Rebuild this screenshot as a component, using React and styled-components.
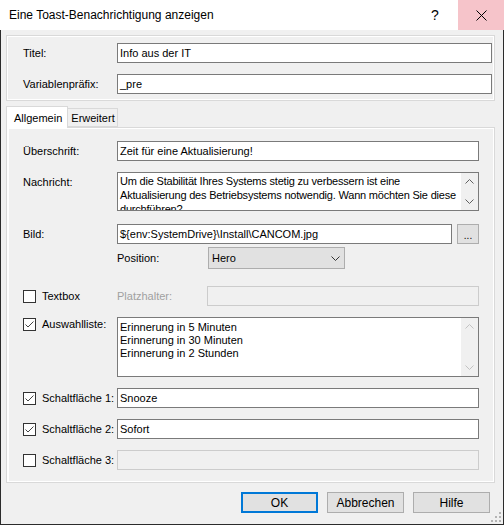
import React from 'react';
import styled, { createGlobalStyle } from 'styled-components';

const GlobalStyle = createGlobalStyle`
  html, body {
    margin: 0;
    padding: 0;
    background: #f0f0f0;
  }
  body {
    font-family: "Liberation Sans", Arial, sans-serif;
    font-size: 11px;
    color: #000;
  }
`;

const Window = styled.div`
  width: 504px;
  height: 525px;
  display: flex;
  flex-direction: column;
  background: #f0f0f0;
`;

const TitleBar = styled.div`
  height: 30px;
  flex: none;
  display: flex;
  align-items: center;
  background: #fff;
`;

const Caption = styled.div`
  flex: 1;
  padding-left: 9px;
  font-size: 12px;
`;

const CaptionButton = styled.div`
  width: 46px;
  height: 30px;
  display: flex;
  align-items: center;
  justify-content: center;
  font-size: 14px;
  background: ${(p) => (p.$close ? '#f6c4ca' : 'transparent')};
`;

const Client = styled.div`
  flex: 1;
  display: flex;
  flex-direction: column;
  border: 1px solid #2b2b2b;
  border-top: none;
  padding: 5px 8px 0 5px;
  position: relative;
`;

const GroupBox = styled.div`
  border: 1px solid #d9d9d9;
  box-shadow: inset 1px 1px 0 #fff, inset -1px -1px 0 #fff;
  padding: 7px 2px 6px 16px;
  display: grid;
  grid-template-columns: 94px 1fr;
  row-gap: 11px;
`;

const Label = styled.div`
  display: flex;
  align-items: ${(p) => (p.$top ? 'flex-start' : 'center')};
  padding-top: ${(p) => p.$pt || 0}px;
  gap: 6px;
  white-space: nowrap;
  color: ${(p) => (p.$disabled ? '#a0a0a0' : '#000')};
`;

const TextBox = styled.div`
  height: 20px;
  box-sizing: border-box;
  flex: 1;
  display: flex;
  align-items: center;
  padding-left: 2px;
  border: 1px solid ${(p) => (p.$disabled ? '#cccccc' : '#7a7a7a')};
  background: ${(p) => (p.$disabled ? '#f0f0f0' : '#fff')};
  white-space: nowrap;
  overflow: hidden;
`;

const TabStrip = styled.div`
  display: flex;
  align-items: flex-end;
  margin-top: 5px;
  height: 21px;
`;

const Tab = styled.div`
  position: relative;
  z-index: 1;
  box-sizing: border-box;
  height: ${(p) => (p.$active ? 22 : 19)}px;
  margin-bottom: ${(p) => (p.$active ? -1 : 0)}px;
  padding: ${(p) => (p.$active ? '0 5px 0 7px' : '0 2px 0 3px')};
  display: flex;
  align-items: center;
  border: 1px solid #d9d9d9;
  border-bottom: ${(p) => (p.$active ? 'none' : '1px solid #d9d9d9')};
  border-left: ${(p) => (p.$active ? '1px solid #d9d9d9' : 'none')};
  background: ${(p) => (p.$active ? '#fff' : '#f0f0f0')};
`;

const TabPanel = styled.div`
  border: 1px solid #d9d9d9;
  box-shadow: inset 2px 1px 0 #fff, inset -1px -1px 0 #fff;
  padding: 13px 15px 12px 16px;
  display: grid;
  grid-template-columns: 94px 1fr;
`;

const Cell = styled.div`
  display: flex;
  align-items: center;
  margin-top: ${(p) => p.$mt || 0}px;
`;

const SubLabel = styled.div`
  width: ${(p) => p.$w}px;
  flex: none;
  color: ${(p) => (p.$disabled ? '#a0a0a0' : '#000')};
`;

const MultiLine = styled.div`
  flex: 1;
  height: ${(p) => p.$h}px;
  box-sizing: border-box;
  display: flex;
  border: 1px solid #7a7a7a;
  background: #fff;
  overflow: hidden;
`;

const Lines = styled.div`
  flex: 1;
  padding: ${(p) => p.$pt}px 0 0 2px;
  line-height: ${(p) => p.$lh}px;
  letter-spacing: ${(p) => p.$ls || 0}px;
  white-space: nowrap;
  overflow: hidden;
`;

const ScrollBar = styled.div`
  width: 17px;
  flex: none;
  display: flex;
  flex-direction: column;
  justify-content: space-between;
  background: #f0f0f0;
`;

const ScrollArrow = styled.div`
  height: 17px;
  display: flex;
  align-items: center;
  justify-content: center;
`;

const SmallButton = styled.div`
  width: 22px;
  height: 20px;
  box-sizing: border-box;
  margin-left: 5px;
  border: 1px solid #adadad;
  background: #e1e1e1;
  display: flex;
  align-items: flex-end;
  justify-content: center;
  line-height: 14px;
  font-size: 10px;
`;

const Select = styled.div`
  width: 137px;
  height: 22px;
  box-sizing: border-box;
  border: 1px solid #adadad;
  background: #e1e1e1;
  display: flex;
  align-items: center;
  justify-content: space-between;
  padding: 0 4px 0 3px;
`;

const CheckBox = styled.div`
  width: 13px;
  height: 13px;
  box-sizing: border-box;
  flex: none;
  border: 1px solid #333;
  background: #fff;
  display: flex;
  align-items: center;
  justify-content: center;
`;

const Footer = styled.div`
  display: flex;
  justify-content: flex-end;
  gap: 9px;
  margin-top: 9px;
  margin-right: 5px;
`;

const Button = styled.div`
  width: 77px;
  height: 21px;
  box-sizing: border-box;
  border: 1px solid ${(p) => (p.$default ? '#0078d7' : '#adadad')};
  box-shadow: ${(p) => (p.$default ? 'inset 0 0 0 1px #0078d7' : 'none')};
  background: #e1e1e1;
  display: flex;
  align-items: center;
  justify-content: center;
  font-size: 12px;
`;

const Grip = styled.svg`
  position: absolute;
  right: 2px;
  bottom: 2px;
`;

const Chevron = ({ up, color = '#606060' }) => (
  <svg width="9" height="5" viewBox="0 0 9 5">
    <polyline
      points={up ? '0.5,4.5 4.5,0.5 8.5,4.5' : '0.5,0.5 4.5,4.5 8.5,0.5'}
      fill="none"
      stroke={color}
      strokeWidth="1"
    />
  </svg>
);

const Check = ({ checked }) => (
  <CheckBox>
    {checked && (
      <svg width="11" height="11" viewBox="0 0 11 11">
        <polyline points="1.5,5.5 4,8 9.5,2.5" fill="none" stroke="#444" strokeWidth="1" />
      </svg>
    )}
  </CheckBox>
);

const Scroller = ({ color }) => (
  <ScrollBar>
    <ScrollArrow>
      <Chevron up color={color} />
    </ScrollArrow>
    <ScrollArrow>
      <Chevron color={color} />
    </ScrollArrow>
  </ScrollBar>
);

const reminders = [
  'Erinnerung in 5 Minuten',
  'Erinnerung in 30 Minuten',
  'Erinnerung in 2 Stunden',
];

const buttons = [
  { n: 1, on: true, value: 'Snooze' },
  { n: 2, on: true, value: 'Sofort' },
  { n: 3, on: false, value: '' },
];

export default function App() {
  return (
    <>
      <GlobalStyle />
      <Window>
        <TitleBar>
          <Caption>Eine Toast-Benachrichtigung anzeigen</Caption>
          <CaptionButton>?</CaptionButton>
          <CaptionButton $close>
            <svg width="11" height="11" viewBox="0 0 11 11">
              <path d="M0.5 0.5 L10.5 10.5 M10.5 0.5 L0.5 10.5" stroke="#000" strokeWidth="1" />
            </svg>
          </CaptionButton>
        </TitleBar>

        <Client>
          <GroupBox>
            <Label>Titel:</Label>
            <TextBox>Info aus der IT</TextBox>
            <Label>Variablenpräfix:</Label>
            <TextBox>_pre</TextBox>
          </GroupBox>

          <TabStrip>
            <Tab $active>Allgemein</Tab>
            <Tab>Erweitert</Tab>
          </TabStrip>

          <TabPanel>
            <Label>Überschrift:</Label>
            <Cell>
              <TextBox>Zeit für eine Aktualisierung!</TextBox>
            </Cell>

            <Label $top $pt={15}>Nachricht:</Label>
            <Cell $mt={11}>
              <MultiLine $h={39}>
                <Lines $pt={1} $lh={14} $ls={-0.2}>
                  Um die Stabilität Ihres Systems stetig zu verbessern ist eine
                  <br />
                  Aktualisierung des Betriebsystems notwendig. Wann möchten Sie diese
                  <br />
                  durchführen?
                </Lines>
                <Scroller color="#606060" />
              </MultiLine>
            </Cell>

            <Label $pt={13}>Bild:</Label>
            <Cell $mt={13}>
              <TextBox>{'${env:SystemDrive}\\Install\\CANCOM.jpg'}</TextBox>
              <SmallButton>...</SmallButton>
            </Cell>

            <div />
            <Cell $mt={3}>
              <SubLabel $w={91}>Position:</SubLabel>
              <Select>
                Hero
                <Chevron color="#333" />
              </Select>
            </Cell>

            <Label $pt={17}>
              <Check />
              Textbox
            </Label>
            <Cell $mt={17}>
              <SubLabel $w={90} $disabled>Platzhalter:</SubLabel>
              <TextBox $disabled />
            </Cell>

            <Label $top $pt={12}>
              <Check checked />
              Auswahlliste:
            </Label>
            <Cell $mt={11}>
              <MultiLine $h={60}>
                <Lines $pt={3} $lh={13}>
                  {reminders.map((r) => (
                    <div key={r}>{r}</div>
                  ))}
                </Lines>
                <Scroller color="#c2c2c2" />
              </MultiLine>
            </Cell>

            {buttons.map((b) => (
              <React.Fragment key={b.n}>
                <Label $pt={11}>
                  <Check checked={b.on} />
                  Schaltfläche {b.n}:
                </Label>
                <Cell $mt={11}>
                  <TextBox $disabled={!b.on}>{b.value}</TextBox>
                </Cell>
              </React.Fragment>
            ))}
          </TabPanel>

          <Footer>
            <Button $default>OK</Button>
            <Button>Abbrechen</Button>
            <Button>Hilfe</Button>
          </Footer>

          <Grip width="10" height="10" viewBox="0 0 10 10">
            {[
              [8, 0], [8, 4], [4, 4], [8, 8], [4, 8], [0, 8],
            ].map(([x, y]) => (
              <rect key={`${x}-${y}`} x={x} y={y} width="2" height="2" fill="#b4b4b4" />
            ))}
          </Grip>
        </Client>
      </Window>
    </>
  );
}
